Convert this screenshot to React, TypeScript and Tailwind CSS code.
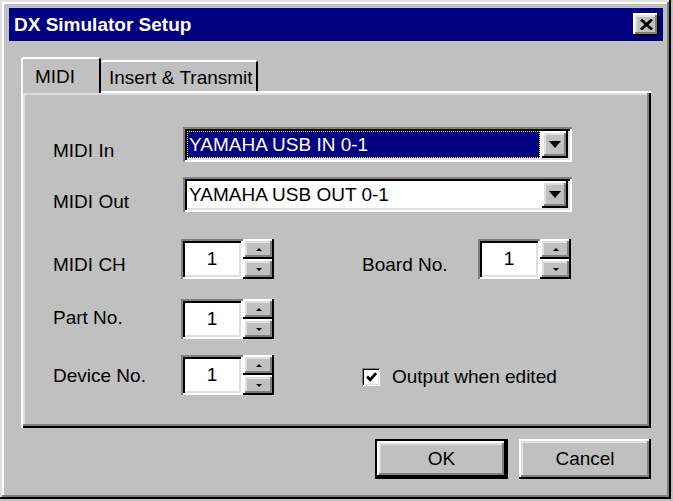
const raised =
  "shadow-[inset_-2px_-2px_0_#000,inset_2px_2px_0_#fff,inset_-4px_-4px_0_#808080,inset_4px_4px_0_#dfdfdf]";
const sunken =
  "shadow-[inset_2px_2px_0_#808080,inset_-2px_-2px_0_#fff,inset_4px_4px_0_#000,inset_-4px_-4px_0_#dfdfdf]";

const DownArrow = () => (
  <svg width="12" height="7" viewBox="0 0 12 7">
    <path d="M0 0H12L6 7Z" fill="#000" />
  </svg>
);

const Combo = ({ value, selected }: { value: string; selected?: boolean }) => (
  <div className={`flex w-[389px] h-[35px] bg-white p-[4px] ${sunken}`}>
    <div className="flex-1 flex items-center pr-[2px]">
      {selected ? (
        <div className="w-full h-full flex items-center bg-[#000080] text-white border border-dotted border-[#f0e060] pl-[1px]">
          {value}
        </div>
      ) : (
        <span className="pl-[2px]">{value}</span>
      )}
    </div>
    <div className={`w-[26px] flex items-center justify-center bg-[#c0c0c0] ${raised}`}>
      <DownArrow />
    </div>
  </div>
);

const SpinBtn = ({ up }: { up?: boolean }) => (
  <div className={`flex-1 flex items-center justify-center bg-[#c0c0c0] ${raised}`}>
    <svg width="6" height="3" viewBox="0 0 6 3">
      <path d={up ? "M0 3H6L3 0Z" : "M0 0H6L3 3Z"} fill="#000" />
    </svg>
  </div>
);

const Spinner = () => (
  <div className="flex h-[40px]">
    <div className={`w-[62px] h-full bg-white flex items-center justify-center ${sunken}`}>1</div>
    <div className="w-[31px] flex flex-col">
      <SpinBtn up />
      <SpinBtn />
    </div>
  </div>
);

export default function App() {
  return (
    <div className="w-[673px] h-[501px] bg-[#c0c0c0] font-['Liberation_Sans',Arial,sans-serif] text-[19px] leading-[22px] text-black">
      <div className="w-[671px] h-[499px] flex flex-col pt-[8px] pl-[9px] pr-[8px] shadow-[inset_-2px_-2px_0_#000,inset_2px_2px_0_#dfdfdf,inset_-4px_-4px_0_#808080,inset_4px_4px_0_#fff]">
        {/* title bar */}
        <div className="h-[33px] bg-[#000080] flex items-center justify-between pl-[5px] pr-[4px]">
          <span className="text-white font-bold text-[19px]">DX Simulator Setup</span>
          <div className={`w-[26px] h-[23px] flex items-center justify-center bg-[#c0c0c0] ${raised}`}>
            <svg width="13" height="11" viewBox="0 0 13 11">
              <path d="M1 0.5L12 10.5M12 0.5L1 10.5" stroke="#000" strokeWidth="2.8" />
            </svg>
          </div>
        </div>

        <div className="px-[12px] pt-[16px]">
          {/* tabs */}
          <div className="flex items-end h-[34px]">
            <div className="relative z-10 -mb-[2px] w-[80px] h-[36px] bg-[#c0c0c0] rounded-t-[3px] border-t-2 border-l-2 border-white border-r-2 border-r-black pl-[12px] pt-[7px]">
              MIDI
            </div>
            <div className="w-[157px] h-[31px] rounded-t-[3px] border-t-2 border-white border-r-2 border-r-black pl-[8px] pt-[5px]">
              Insert &amp; Transmit
            </div>
          </div>

          {/* panel */}
          <div className="h-[337px] pl-[32px] pt-[36px] flex flex-col shadow-[inset_2px_2px_0_#fff,inset_-2px_-2px_0_#000,inset_-4px_-4px_0_#808080,inset_4px_4px_0_#dfdfdf]">
            <div className="flex items-start">
              <div className="w-[130px] mt-[13px]">MIDI In</div>
              <Combo value="YAMAHA USB IN 0-1" selected />
            </div>
            <div className="flex items-start mt-[15px]">
              <div className="w-[130px] mt-[14px]">MIDI Out</div>
              <Combo value="YAMAHA USB OUT 0-1" />
            </div>
            <div className="flex items-start mt-[26px]">
              <div className="w-[128px] mt-[15px]">MIDI CH</div>
              <Spinner />
              <div className="w-[116px] ml-[88px] mt-[15px]">Board No.</div>
              <Spinner />
            </div>
            <div className="flex items-start mt-[20px]">
              <div className="w-[128px] mt-[8px]">Part No.</div>
              <Spinner />
            </div>
            <div className="flex items-start mt-[16px]">
              <div className="w-[128px] mt-[10px]">Device No.</div>
              <Spinner />
              <div className="flex items-center ml-[88px] mt-[11px] gap-[12px]">
                <div className="w-[18px] h-[18px] bg-white flex items-center justify-center shadow-[inset_1px_1px_0_#808080,inset_-1px_-1px_0_#fff,inset_2px_2px_0_#000,inset_-2px_-2px_0_#dfdfdf]">
                  <svg width="11" height="10" viewBox="0 0 11 10">
                    <path d="M1 4.5L4.2 7.8L10 1.2" stroke="#000" strokeWidth="2.8" fill="none" />
                  </svg>
                </div>
                <span>Output when edited</span>
              </div>
            </div>
          </div>

          {/* buttons */}
          <div className="flex justify-end gap-[11px] mt-[11px]">
            <div className="w-[133px] h-[40px] border-2 border-black">
              <div className={`w-full h-full flex items-center justify-center ${raised}`}>OK</div>
            </div>
            <div className={`w-[132px] h-[40px] flex items-center justify-center ${raised}`}>Cancel</div>
          </div>
        </div>
      </div>
    </div>
  );
}
